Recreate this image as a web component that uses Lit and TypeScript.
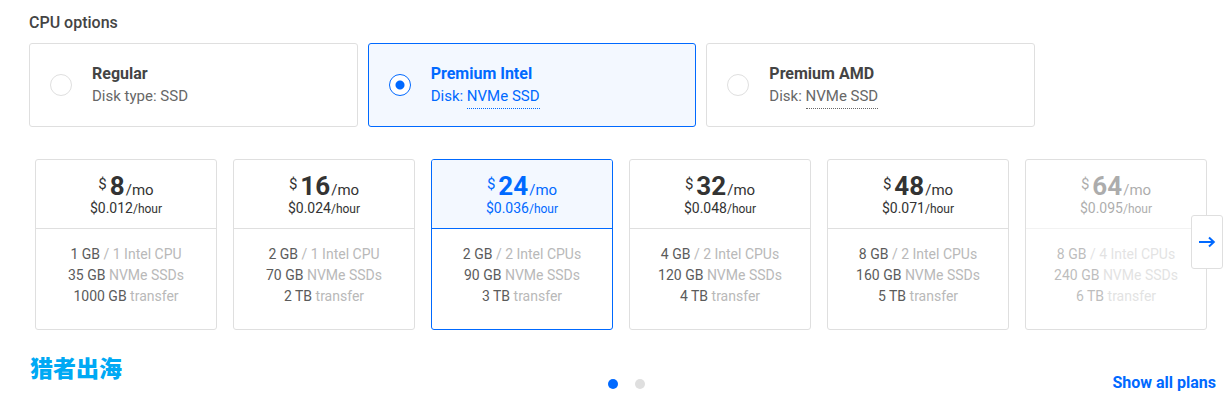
import { LitElement, html, css } from "lit";
import { customElement, state } from "lit/decorators.js";
import { classMap } from "lit/directives/class-map.js";

interface CpuOption {
  id: string;
  name: string;
  prefix: string;
  disk: string;
  hint: boolean;
}

interface Plan {
  monthly: number;
  hourly: string;
  memory: string;
  cpu: string;
  disk: string;
  transfer: string;
  faded?: boolean;
}

const OPTIONS: CpuOption[] = [
  { id: "regular", name: "Regular", prefix: "Disk type:", disk: "SSD", hint: false },
  { id: "intel", name: "Premium Intel", prefix: "Disk:", disk: "NVMe SSD", hint: true },
  { id: "amd", name: "Premium AMD", prefix: "Disk:", disk: "NVMe SSD", hint: true },
];

const PLANS: Plan[] = [
  { monthly: 8, hourly: "0.012", memory: "1 GB", cpu: "1 Intel CPU", disk: "35 GB", transfer: "1000 GB" },
  { monthly: 16, hourly: "0.024", memory: "2 GB", cpu: "1 Intel CPU", disk: "70 GB", transfer: "2 TB" },
  { monthly: 24, hourly: "0.036", memory: "2 GB", cpu: "2 Intel CPUs", disk: "90 GB", transfer: "3 TB" },
  { monthly: 32, hourly: "0.048", memory: "4 GB", cpu: "2 Intel CPUs", disk: "120 GB", transfer: "4 TB" },
  { monthly: 48, hourly: "0.071", memory: "8 GB", cpu: "2 Intel CPUs", disk: "160 GB", transfer: "5 TB" },
  { monthly: 64, hourly: "0.095", memory: "8 GB", cpu: "4 Intel CPUs", disk: "240 GB", transfer: "6 TB", faded: true },
];

@customElement("app-root")
export class AppRoot extends LitElement {
  @state() private cpu = "intel";
  @state() private plan = 24;
  @state() private page = 0;

  static styles = css`
    :host {
      display: block;
      background: #fff;
      color: #444;
      font-family: Roboto, "Liberation Sans", sans-serif;
      font-size: 15px;
      line-height: 24px;
    }
    * {
      box-sizing: border-box;
    }
    fieldset {
      border: 0;
      margin: 0;
      padding: 0;
      min-width: 0;
    }
    .cpu {
      padding: 0 29px;
    }
    .title {
      padding: 11px 0 8px;
      font-size: 16px;
      font-weight: 500;
    }
    .options {
      display: grid;
      grid-template-columns: repeat(3, 1fr);
      gap: 10px;
      max-width: 1006px;
    }
    .option {
      display: flex;
      align-items: center;
      gap: 20px;
      min-height: 84px;
      padding: 0 20px;
      border: 1px solid #dfdfdf;
      border-radius: 3px;
      line-height: 23px;
      cursor: pointer;
    }
    .option.selected {
      border-color: #0069ff;
      background: #f3f8ff;
      color: #0069ff;
    }
    .radio {
      appearance: none;
      flex: none;
      width: 22px;
      height: 22px;
      margin: 0;
      border: 1px solid #dfdfdf;
      border-radius: 50%;
      background: #fff;
    }
    .radio:checked {
      border-color: #0069ff;
      background: radial-gradient(circle, #0069ff 4px, #fff 5px);
    }
    .name {
      display: block;
      font-size: 16px;
      font-weight: 700;
    }
    .disk {
      display: block;
      color: #676767;
    }
    .selected .disk {
      color: inherit;
    }
    .hint {
      padding-bottom: 3px;
      border-bottom: 1px dotted currentColor;
    }
    .carousel {
      position: relative;
      padding: 32px 16px 0 35px;
    }
    .plans {
      display: grid;
      grid-template-columns: repeat(6, 1fr);
      gap: 16px;
    }
    .plan {
      display: block;
      border: 1px solid #dfdfdf;
      border-radius: 3px;
      text-align: center;
      cursor: pointer;
      overflow: hidden;
    }
    .plan-input {
      position: absolute;
      opacity: 0;
      width: 1px;
      height: 1px;
      margin: 0;
    }
    .price {
      padding: 14px 0 9px;
      border-bottom: 1px solid #dfdfdf;
      color: #333;
    }
    .monthly {
      display: flex;
      justify-content: center;
      align-items: baseline;
      line-height: 16px;
    }
    .dollar {
      align-self: flex-start;
      line-height: 20px;
      margin-right: 3px;
    }
    .amount {
      margin-right: 1px;
      font-size: 26px;
      font-weight: 700;
      line-height: 24px;
    }
    .hourly {
      font-size: 14px;
      line-height: 20px;
    }
    .unit {
      font-size: 12px;
    }
    .specs {
      margin: 0;
      padding: 15px 0 22px;
      list-style: none;
      font-size: 14px;
      line-height: 21px;
      color: #b9b9b9;
    }
    .value {
      color: #5b5b5b;
    }
    .plan.selected {
      border-color: #0069ff;
    }
    .plan.selected .price {
      border-color: #0069ff;
      background: #f3f8ff;
      color: #0069ff;
    }
    .faded .price,
    .faded .specs {
      opacity: 0.4;
    }
    .next {
      position: absolute;
      right: 0;
      bottom: 61px;
      display: grid;
      place-items: center;
      width: 32px;
      height: 54px;
      padding: 0;
      border: 1px solid #dfdfdf;
      border-radius: 3px;
      background: #fff;
      color: #0069ff;
      cursor: pointer;
    }
    .footer {
      display: grid;
      grid-template-columns: 1fr auto 1fr;
      padding: 25px 7px 12px 30px;
    }
    .brand {
      color: #00a9f4;
      font-family: "Noto Sans CJK SC", sans-serif;
      font-size: 23px;
      font-weight: 900;
      line-height: 24px;
    }
    .dots {
      display: flex;
      align-self: end;
      gap: 17px;
      padding: 0 0 6px 6px;
    }
    .dot {
      width: 10px;
      height: 10px;
      padding: 0;
      border: 0;
      border-radius: 50%;
      background: #dfdfdf;
      cursor: pointer;
    }
    .dot.current {
      background: #0069ff;
    }
    .all {
      justify-self: end;
      margin-top: 16px;
      color: #0069ff;
      font-size: 16px;
      font-weight: 700;
      text-decoration: none;
    }
  `;

  private renderOption(o: CpuOption) {
    return html`
      <label class=${classMap({ option: true, selected: this.cpu === o.id })}>
        <input class="radio" type="radio" name="cpu" .checked=${this.cpu === o.id}
          @change=${() => (this.cpu = o.id)} />
        <span>
          <span class="name">${o.name}</span>
          <span class="disk">${o.prefix} <span class=${classMap({ hint: o.hint })}>${o.disk}</span></span>
        </span>
      </label>
    `;
  }

  private renderPlan(p: Plan) {
    return html`
      <label class=${classMap({ plan: true, selected: this.plan === p.monthly, faded: !!p.faded })}>
        <input class="plan-input" type="radio" name="plan" .checked=${this.plan === p.monthly}
          @change=${() => (this.plan = p.monthly)} />
        <div class="price">
          <div class="monthly">
            <span class="dollar">$</span><span class="amount">${p.monthly}</span><span>/mo</span>
          </div>
          <div class="hourly">$${p.hourly}<span class="unit">/hour</span></div>
        </div>
        <ul class="specs">
          <li><span class="value">${p.memory}</span> / ${p.cpu}</li>
          <li><span class="value">${p.disk}</span> NVMe SSDs</li>
          <li><span class="value">${p.transfer}</span> transfer</li>
        </ul>
      </label>
    `;
  }

  render() {
    return html`
      <fieldset class="cpu">
        <legend class="title">CPU options</legend>
        <div class="options">${OPTIONS.map((o) => this.renderOption(o))}</div>
      </fieldset>
      <div class="carousel">
        <div class="plans" role="radiogroup" aria-label="Plans">${PLANS.map((p) => this.renderPlan(p))}</div>
        <button class="next" type="button" aria-label="Next plans" @click=${() => (this.page = 1)}>
          <svg width="18" height="14" viewBox="0 0 18 14" fill="none" stroke="currentColor" stroke-width="2">
            <path d="M1 7h15M11 2.5L15.8 7L11 11.5" />
          </svg>
        </button>
      </div>
      <div class="footer">
        <span class="brand">猎者出海</span>
        <div class="dots">
          ${[0, 1].map(
            (i) => html`<button type="button" aria-label="Page ${i + 1}"
              class=${classMap({ dot: true, current: this.page === i })}
              @click=${() => (this.page = i)}></button>`
          )}
        </div>
        <a class="all" href="#plans">Show all plans</a>
      </div>
    `;
  }
}
